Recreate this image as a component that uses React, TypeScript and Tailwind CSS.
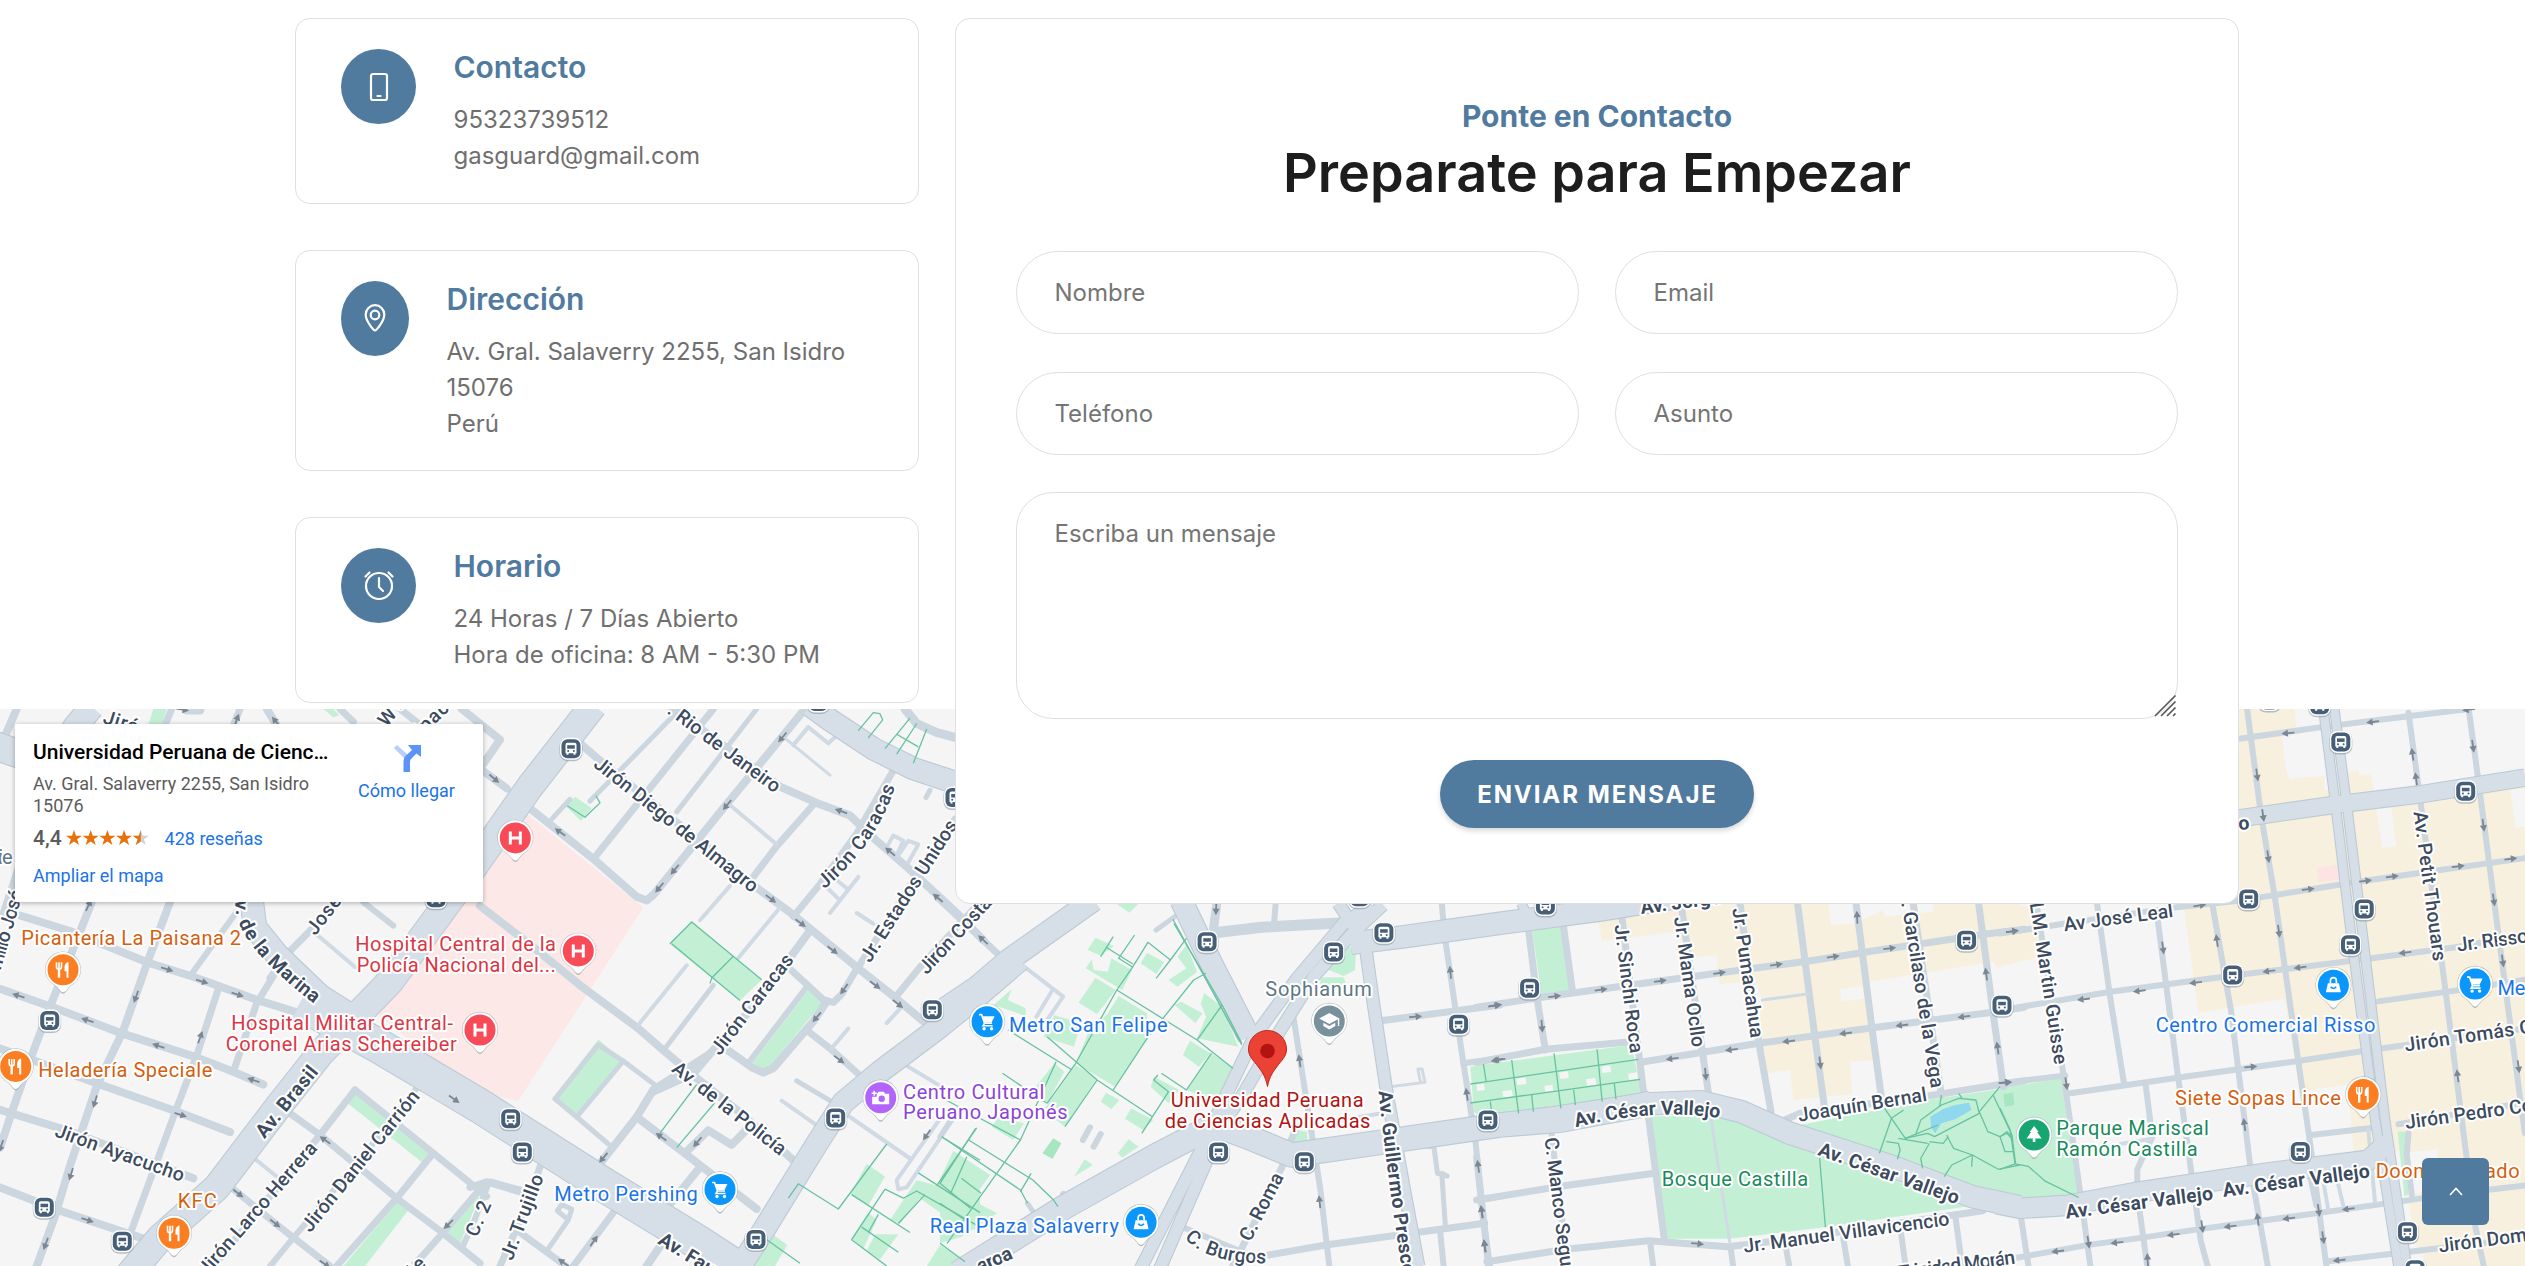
import React from "react";

/* ------------------------------------------------------------------ */
/* Map data: every tile has its own grid, projected to map pixels.     */
/* ------------------------------------------------------------------ */

type Tile = { x: number; y: number; sx: number; sy: number };
type Pt = [number, number];

const MAP_TOP = 709;

const tiles: Record<string, Tile> = {
  A: { x: 0, y: 700, sx: 3, sy: 2.77 },
  B: { x: 480, y: 700, sx: 3, sy: 2.77 },
  C: { x: 940, y: 890, sx: 2.8, sy: 3 },
  D: { x: 1480, y: 890, sx: 2.904, sy: 3 },
  E: { x: 2000, y: 700, sx: 2.987, sy: 2.77 },
};

const project = (tile: string, x: number, y: number): Pt => {
  const t = tiles[tile];
  return [t.x + x / t.sx, t.y + y / t.sy - MAP_TOP];
};

const parse = (tile: string, s: string): Pt[] =>
  s.split(" ").map((p) => {
    const [x, y] = p.split(",").map(Number);
    return project(tile, x, y);
  });

const line = (tile: string, s: string) =>
  "M" + parse(tile, s).map(([x, y]) => `${x.toFixed(1)} ${y.toFixed(1)}`).join("L");

const zones: [string, string, string][] = [
  ["B", "#fce8e6", "140,315 490,575 115,1110 60,1100 -40,1055 -80,1040 -325,858 -200,690 0,450"],
  ["D", "#f8f0de", "340,85 470,70 600,60 600,30 1568,30 1568,205 1500,230 1490,215 1130,275 1145,510 1075,515 1080,612 910,630 900,540 833,550 805,440 820,330 800,275 695,282 688,195 620,202 565,125 355,153"],
  ["D", "#f5f5f5", "1010,40 1320,40 1315,65 1175,80 1170,60 1090,100 1020,105"],
  ["D", "#f5f5f5", "1045,298 1110,288 1115,325 1050,335"],
  ["E", "#f8f0de", "-10,570 120,570 110,715 55,725 -10,742"],
  ["E", "#f8f0de", "700,25 880,25 885,75 843,105 853,190 865,218 970,210 970,250 1040,250 1040,200 1070,195 1075,210 1108,207 1118,262 1568,200 1568,1490 1250,1535 1190,1250 1055,1250 1040,1065 895,1085 850,828 593,866 550,580 700,560"],
  ["E", "#f5f5f5", "1123,298 1168,292 1183,405 1142,410"],
  ["E", "#f5f5f5", "1525,250 1568,245 1568,350 1540,355"],
  ["E", "#f5f5f5", "1215,1252 1305,1245 1320,1350 1225,1370"],
  ["E", "#fce4e4", "945,467 1012,455 1017,497 952,505"],
  ["E", "#c3f0d5", "1188,1195 1212,1195 1220,1370 1208,1375"],
  ["E", "#f8f0de", "1250,1440 1568,1400 1568,1568 1270,1568"],
  ["A", "#c3f0d5", "460,25 500,25 485,70 445,70"],
  ["A", "#c3f0d5", "970,25 1000,25 1018,42 1000,48"],
  ["A", "#c3f0d5", "1070,1090 1290,1252 1265,1280 1040,1115"],
  ["A", "#c3f0d5", "1193,1390 1226,1412 1095,1568 1030,1568"],
  ["A", "#c3f0d5", "1450,1350 1380,1505 1330,1470"],
  ["B", "#c3f0d5", "635,612 845,775 780,832 568,675"],
  ["B", "#c3f0d5", "988,800 1030,835 875,1010 850,1024 818,1005"],
  ["B", "#c3f0d5", "285,268 335,300 303,335 258,295"],
  ["B", "#c3f0d5", "355,940 425,995 290,1152 218,1105"],
  ["B", "#c3f0d5", "1160,1285 1215,1320 1165,1400 1110,1370"],
  ["B", "#c3f0d5", "1420,1250 1500,1300 1500,1470 1440,1460 1320,1380 1260,1450 1230,1440 1310,1330 1370,1345"],
  ["B", "#c3f0d5", "1115,1490 1165,1420 1190,1440 1150,1520"],
  ["B", "#c3f0d5", "1185,1480 1255,1480 1200,1550 1160,1525"],
  ["B", "#c3f0d5", "860,1468 922,1510 885,1568 780,1568"],
  ["B", "#c3f0d5", "1380,1510 1450,1550 1440,1568 1340,1568"],
  ["C", "#c3f0d5", "495,42 555,42 530,68"],
  ["C", "#c3f0d5", "435,143 487,168 450,197 413,180"],
  ["C", "#c3f0d5", "425,208 430,240 470,245 480,205 538,240 510,300 408,235"],
  ["C", "#c3f0d5", "435,263 492,300 440,372 388,338"],
  ["C", "#c3f0d5", "580,188 628,217 605,252 562,220"],
  ["C", "#c3f0d5", "500,318 580,370 578,450 490,590 380,520 415,430 470,370"],
  ["C", "#c3f0d5", "690,165 720,245 665,290 640,270 690,235 665,200"],
  ["C", "#c3f0d5", "200,298 150,345 240,378 240,355 190,330"],
  ["C", "#c3f0d5", "320,375 395,400 375,470 290,440"],
  ["C", "#c3f0d5", "675,335 735,370 715,400 657,345"],
  ["C", "#c3f0d5", "740,310 790,350 835,470 720,445 745,380 730,340"],
  ["C", "#c3f0d5", "700,452 757,490 725,530 680,495"],
  ["C", "#c3f0d5", "760,490 822,535 785,640 690,600"],
  ["C", "#c3f0d5", "380,525 440,565 350,710 290,660"],
  ["C", "#c3f0d5", "320,520 348,545 300,640 265,595"],
  ["C", "#c3f0d5", "165,680 235,700 205,750 145,710"],
  ["C", "#c3f0d5", "465,608 502,630 480,657 450,635"],
  ["C", "#c3f0d5", "535,655 597,690 570,720 518,687"],
  ["C", "#c3f0d5", "600,560 670,600 640,640 590,590"],
  ["C", "#c3f0d5", "38,783 140,855 90,930 0,870"],
  ["C", "#c3f0d5", "0,870 90,930 160,970 60,1040 0,1060"],
  ["C", "#c3f0d5", "0,1070 70,1115 60,1128 0,1128"],
  ["C", "#a8e5c1", "317,745 340,760 315,807 287,790"],
  ["C", "#c3f0d5", "528,748 556,770 510,803 498,790"],
  ["C", "#c3f0d5", "405,808 428,825 375,860"],
  ["C", "#c3f0d5", "1110,165 1165,175 1162,240 1130,258 1088,240"],
  ["C", "#c3f0d5", "1065,262 1130,262 1140,290 1065,290"],
  ["C", "#c3f0d5", "1000,720 1028,725 1030,768 988,770"],
  ["D", "#c3f0d5", "150,107 233,97 260,303 178,313"],
  ["D", "#c3f0d5", "-28,530 0,525 440,465 470,612 0,680 -18,665"],
  ["D", "#f5f5f5", "105,566 132,562 135,582 108,585"],
  ["D", "#f5f5f5", "65,604 92,600 95,620 68,622"],
  ["D", "#f5f5f5", "187,588 210,584 213,603 190,606"],
  ["D", "#f5f5f5", "230,548 255,544 258,564 233,567"],
  ["D", "#f5f5f5", "308,568 335,564 338,584 311,587"],
  ["D", "#f5f5f5", "352,530 378,526 381,546 355,549"],
  ["D", "#f5f5f5", "430,551 456,547 459,567 433,570"],
  ["D", "#f5f5f5", "-10,584 12,581 14,600 -8,603"],
  ["D", "#c3f0d5", "497,680 640,672 760,700 990,790 1410,950 1000,1012 725,1046 542,1046"],
  ["D", "#c3f0d5", "930,705 1300,630 1490,600 1568,590 1568,920 1440,890 1290,835 940,720"],
  ["E", "#c3f0d5", "0,1075 185,1048 190,1100 235,1380 60,1385 0,1375"],
  ["D", "#a8e5c1", "1520,612 1548,608 1552,645 1524,650"],
  ["D", "#8fd8ee", "1308,680 1345,657 1380,645 1420,638 1427,660 1380,688 1340,700 1322,730 1310,712"],
];

/* [tile, width, points] */
const minorRoads: [string, number, string][] = [
  ["A", 8, "50,25 15,100"],
  ["A", 7, "515,25 495,70"],
  ["A", 9, "560,28 600,28"],
  ["A", 7, "720,25 700,70"],
  ["A", 8, "830,70 800,25"],
  ["A", 7, "1020,25 1060,60"],
  ["A", 7, "1200,25 1290,90"],
  ["A", 8, "1385,25 1500,110 1440,190 1520,245"],
  ["A", 7, "60,450 10,590"],
  ["A", 8, "60,597 210,640 445,728 575,765 775,832 960,885"],
  ["A", 8, "0,800 170,855 370,925 590,990 700,1030 790,1065"],
  ["A", 8, "0,965 60,985 300,1065 530,1140 690,1197"],
  ["A", 8, "0,1135 200,1192 580,1325"],
  ["A", 8, "0,1350 180,1415 310,1455 430,1492"],
  ["A", 8, "275,560 150,850 95,985 40,1130 0,1240"],
  ["A", 8, "510,560 445,720 370,915 290,1070 210,1290 165,1430 110,1568"],
  ["A", 6, "715,580 570,765"],
  ["A", 7, "655,800 590,985 530,1130 450,1330 390,1480"],
  ["A", 7, "820,765 770,840 700,1030"],
  ["A", 7, "1015,560 865,700 810,770"],
  ["A", 4, "945,645 1065,740"],
  ["A", 6, "1090,560 1180,625"],
  ["A", 7, "870,1145 960,1205 1190,1380 1320,1470 1440,1560"],
  ["A", 4, "750,1260 830,1320"],
  ["A", 7, "680,1340 760,1400 840,1460 990,1568"],
  ["A", 7, "1065,1080 960,1205 640,1568"],
  ["A", 7, "1065,1080 1300,1255 1460,1375"],
  ["A", 6, "1250,1075 1100,1250 880,1490 810,1568"],
  ["A", 7, "1300,1255 1190,1380 1010,1568"],
  ["A", 7, "1570,1360 1470,1335 1435,1360 1330,1475 1240,1568"],
  ["A", 6, "1465,1340 1420,1450 1390,1510"],
  ["B", 8, "0,570 140,670 300,790 475,910 550,970 640,1040 790,1150 940,1275"],
  ["B", 8, "300,120 350,160 830,520 940,595 1130,740 1240,820 1330,890"],
  ["B", 8, "150,300 340,440 470,545 500,555 520,540 730,300 975,25"],
  ["B", 5, "600,25 330,280"],
  ["B", 7, "700,25 470,290 345,435"],
  ["B", 5, "830,25 590,310"],
  ["B", 8, "560,10 750,140 900,240 1010,285 1110,320 1190,390 1290,470 1430,590 1510,665"],
  ["B", 7, "1240,195 1130,370 1020,510 940,600"],
  ["B", 8, "985,645 830,840 690,980 520,1080 470,1155 355,1290"],
  ["B", 8, "690,980 640,1035 520,1085"],
  ["B", 7, "1000,290 890,405 820,490"],
  ["B", 4, "755,295 890,400"],
  ["B", 4, "750,515 660,610"],
  ["B", 4, "900,575 775,715"],
  ["B", 4, "620,735 475,900"],
  ["B", 5, "700,790 555,965"],
  ["B", 3, "920,110 1050,208"],
  ["B", 4, "940,125 985,75 1045,120 1075,95"],
  ["B", 4, "1030,510 1080,555"],
  ["B", 4, "1065,495 1105,525"],
  ["B", 4, "1135,490 1050,590"],
  ["B", 4, "1130,590 1180,620"],
  ["B", 4, "1225,400 1240,375 1270,390 1250,430"],
  ["B", 4, "1255,430 1285,390 1315,400 1285,450"],
  ["B", 7, "1425,330 1300,500 1170,690 1130,745 1085,815 1060,838 1030,830 930,745"],
  ["B", 8, "1040,835 1000,890 880,1020 850,1032 820,1020 735,965"],
  ["B", 6, "980,795 810,1000"],
  ["B", 7, "980,915 1050,965 1140,1040"],
  ["B", 4, "1105,910 1055,965"],
  ["B", 4, "1220,895 1265,850"],
  ["B", 7, "1500,560 1320,740 1245,825"],
  ["B", 9, "1275,25 1310,65 1370,90 1430,105"],
  ["B", 5, "1350,250 1338,270"],
  ["B", 8, "470,1155 620,1260 830,1410"],
  ["B", 8, "615,1255 685,1192 755,1232 800,1190"],
  ["B", 8, "655,1300 545,1425"],
  ["B", 8, "550,1500 500,1568"],
  ["B", 7, "185,1280 140,1400 60,1568"],
  ["B", 7, "-30,1350 20,1335 130,1365"],
  ["B", 7, "400,1420 280,1568"],
  ["B", 7, "120,1475 290,1590"],
  ["B", 5, "205,1520 265,1440 275,1410 245,1398 232,1415 265,1440"],
  ["B", 5, "225,1105 355,955 430,1000 530,1070"],
  ["B", 5, "225,1105 290,1155 385,1230"],
  ["B", 5, "430,1000 290,1155"],
  ["B", 5, "215,330 270,275"],
  ["B", 4, "1265,1005 1400,1080"],
  ["B", 5, "950,1055 1050,1110"],
  ["B", 4, "905,1110 1005,1175"],
  ["B", 4, "1110,1155 1290,1270"],
  ["B", 4, "1380,1160 1250,1330 1255,1355 1280,1350 1420,1160"],
  ["C", 7, "-5,25 175,205"],
  ["C", 4, "230,225 345,320 300,390"],
  ["C", 4, "315,300 270,380"],
  ["C", 5, "605,120 660,78"],
  ["C", 6, "400,750 420,712"],
  ["C", 6, "430,770 450,732"],
  ["C", 5, "0,740 30,690"],
  ["C", 6, "345,912 360,935"],
  ["C", 5, "245,940 270,980"],
  ["C", 11, "770,128 900,112 1130,98"],
  ["C", 9, "775,40 766,115"],
  ["C", 6, "940,40 935,105"],
  ["C", 6, "1405,40 1412,130 1445,370 1460,480 1480,620 1500,760 1520,980 1540,1128"],
  ["C", 7, "1235,392 1568,345"],
  ["C", 6, "1465,520 1570,505"],
  ["C", 6, "985,350 1010,520 1045,760 1065,900 1090,1128"],
  ["C", 3, "1260,590 1358,577 1350,537 1338,537 1345,575"],
  ["C", 5, "1350,768 1383,770 1393,850 1420,858 1405,850 1415,1010"],
  ["C", 7, "920,1095 1080,1065 1350,1025 1525,1000"],
  ["C", 6, "1400,1020 1410,1128"],
  ["C", 6, "1520,928 1580,918"],
  ["C", 7, "965,815 820,1128"],
  ["C", 6, "665,1005 900,1110"],
  ["C", 4, "1170,682 1245,668"],
  ["C", 7, "1000,710 975,770"],
  ["D", 7, "140,110 165,320 190,480"],
  ["D", 7, "240,90 268,300"],
  ["D", 7, "410,65 450,400 478,630"],
  ["D", 7, "585,50 645,480 665,620"],
  ["D", 7, "755,40 810,460 845,665"],
  ["D", 7, "922,40 970,420 1000,650"],
  ["D", 7, "1092,40 1140,430 1168,640"],
  ["D", 7, "1258,40 1340,615"],
  ["D", 7, "1448,40 1490,370 1520,590"],
  ["D", 7, "-10,352 180,322 560,268 960,212 1160,180 1470,132 1580,118"],
  ["D", 7, "-10,517 190,478 440,455"],
  ["D", 7, "475,515 810,460 1130,415 1500,365 1580,352"],
  ["D", 6, "205,710 255,1128"],
  ["D", 7, "490,685 535,1045"],
  ["D", 7, "-10,930 240,888 505,850"],
  ["D", 7, "20,1115 250,1078 490,1052 720,1070 900,1048 1460,962"],
  ["D", 7, "-10,800 25,1128"],
  ["D", 7, "880,692 930,670 1300,618 1580,572"],
  ["D", 6, "495,1065 503,1128"],
  ["D", 6, "728,1075 735,1128"],
  ["D", 6, "888,1070 898,1128"],
  ["D", 6, "1055,1045 1068,1128"],
  ["D", 6, "1220,1010 1236,1128"],
  ["D", 6, "1380,975 1400,1128"],
  ["D", 3, "670,680 725,1055"],
  ["D", 3, "820,330 950,312"],
  ["E", 6, "738,25 780,320 820,540 880,930 925,1220 975,1568"],
  ["E", 6, "1220,35 1250,240 1330,800 1420,1460 1445,1568"],
  ["E", 6, "1400,25 1430,230 1520,870 1568,1200"],
  ["E", 6, "710,108 960,75 1220,45 1400,25"],
  ["E", 6, "0,647 190,620 520,575 720,555 1060,505 1320,470 1568,438"],
  ["E", 6, "30,855 330,808 680,765 1070,720 1360,685 1568,650"],
  ["E", 6, "635,570 690,860 750,1310 800,1568"],
  ["E", 6, "470,600 530,1030 600,1500 620,1568"],
  ["E", 6, "290,565 330,830 370,1060"],
  ["E", 6, "110,570 190,1040 245,1400 270,1568"],
  ["E", 6, "205,1090 540,1045 890,1000 1100,970 1568,910"],
  ["E", 6, "0,1062 195,1040"],
  ["E", 6, "930,1205 1115,1185"],
  ["E", 6, "1190,1175 1568,1115"],
  ["E", 6, "1130,835 1360,805 1568,775"],
  ["E", 6, "435,1065 455,1210 410,1300 410,1370 440,1568"],
  ["E", 4, "360,1230 455,1215"],
  ["E", 6, "50,1545 260,1510 420,1490 600,1465 960,1420 1150,1395 1350,1368 1568,1345"],
  ["E", 6, "62,1430 85,1568"],
  ["E", 6, "1220,1200 1215,1260 1230,1370"],
  ["E", 6, "920,1290 945,1400"],
  ["E", 4, "965,1330 980,1410"],
  ["E", 4, "1010,1340 1025,1400"],
  ["E", 4, "1100,1190 1120,1390"],
  ["E", 6, "975,1555 1210,1530 1568,1490"],
];

const majorRoads: [string, number, string][] = [
  ["A", 24, "275,20 225,75 200,110"],
  ["A", 28, "-20,125 60,150"],
  ["A", 23, "755,555 765,630 830,705 960,820 1080,890"],
  ["B", 27, "340,15 150,240 -40,490 -270,780 -480,980 -600,1120 -790,1350 -960,1490 -1060,1600"],
  ["B", 34, "-540,840 -300,960 -100,1070 0,1125 375,1345 650,1500 800,1590"],
  ["B", 22, "990,15 1050,55 1180,135 1300,190 1430,230 1500,240"],
  ["B", 22, "1620,720 1500,815 1380,905 1200,1030 1090,1115 1010,1230 850,1470 760,1600"],
  ["C", 22, "-20,380 105,290 190,212 430,30"],
  ["C", 22, "675,30 760,220 865,440"],
  ["C", 12, "1210,45 1130,100 1000,265 880,440 790,640 740,760 555,1150"],
  ["C", 12, "1240,45 1155,130 1050,255 950,425 850,610 800,690 760,780 610,1150"],
  ["C", 24, "50,1150 350,950 600,800 770,705"],
  ["C", 24, "770,705 860,740 985,795 1150,770 1568,705 1740,690 1990,640"],
  ["C", 22, "1150,160 1300,140 1568,100 1850,60 2050,25"],
  ["C", 12, "1115,40 1190,160 1215,350 1250,600 1300,900 1340,1128"],
  ["D", 9, "120,40 150,105"],
  ["D", 22, "0,710 200,685 480,642 640,635 760,665 900,730 1200,830 1430,920 1568,950"],
  ["E", 17, "700,330 1000,290 1250,262 1568,215"],
  ["E", 20, "-10,1395 60,1408 200,1400 400,1365 800,1310 1100,1275 1160,1225"],
  ["E", 9, "965,20 1010,350 1050,660 1120,1160 1190,1568"],
  ["E", 9, "998,20 1040,320 1085,660 1150,1160 1215,1568"],
];

const parkPaths: [string, string][] = [
  ["B", "570,675 635,615 845,775"],
  ["B", "575,675 780,832"],
  ["B", "760,710 695,770 690,785"],
  ["B", "650,1065 540,1200"],
  ["B", "705,1115 590,1240"],
  ["B", "262,293 315,325 360,285 348,265"],
  ["B", "1135,85 1180,35 1200,38 1208,55 1165,105"],
  ["B", "1290,50 1215,135"],
  ["B", "1310,65 1250,150"],
  ["B", "1340,80 1300,175"],
  ["B", "1250,95 1315,130"],
  ["B", "1220,1230 1075,1410 955,1340 925,1380"],
  ["B", "1385,1210 1500,1275"],
  ["B", "1315,1310 1500,1420"],
  ["B", "1490,1185 1370,1345"],
  ["B", "1215,1355 1115,1495 1220,1568"],
  ["B", "1215,1355 1270,1380 1310,1360 1500,1460"],
  ["B", "1115,1370 1290,1475"],
  ["B", "1335,1370 1255,1450"],
  ["B", "1145,1460 1255,1530"],
  ["B", "1195,1425 1165,1475"],
  ["B", "860,1495 960,1560"],
  ["C", "652,88 845,465"],
  ["C", "655,100 790,345 845,460"],
  ["C", "645,210 582,157 540,230 495,300 380,520 300,640"],
  ["C", "690,145 645,210 605,265"],
  ["C", "545,135 500,205 540,232"],
  ["C", "485,140 450,200"],
  ["C", "465,172 540,222"],
  ["C", "495,300 720,450 820,535"],
  ["C", "745,250 710,270 580,445 485,600"],
  ["C", "790,345 720,450"],
  ["C", "300,440 440,570 595,680 565,730"],
  ["C", "760,490 690,600 620,550"],
  ["C", "175,550 300,640"],
  ["C", "190,420 370,540"],
  ["C", "325,515 225,750 20,1060"],
  ["C", "440,570 350,710"],
  ["C", "640,605 595,680"],
  ["C", "640,605 598,570 610,555"],
  ["C", "5,740 225,900 245,940"],
  ["C", "80,750 260,870 318,930 330,950"],
  ["C", "0,620 225,750"],
  ["C", "255,850 225,905"],
  ["C", "100,715 0,880 85,955"],
  ["C", "60,865 115,910"],
  ["C", "75,800 30,910"],
  ["C", "0,940 70,990"],
  ["C", "0,1060 70,1115"],
  ["D", "-28,582 0,578 460,508"],
  ["D", "-28,639 0,635 465,568"],
  ["D", "10,522 18,575"],
  ["D", "92,510 112,670"],
  ["D", "215,490 235,655"],
  ["D", "340,478 355,635"],
  ["D", "150,615 155,665"],
  ["D", "272,600 277,645"],
  ["D", "390,580 395,628"],
  ["D", "30,635 33,660"],
  ["D", "985,790 1003,1012"],
  ["D", "1175,655 1235,745 1330,705"],
  ["D", "1230,660 1195,685 1160,790"],
  ["D", "1180,755 1215,760 1220,780 1212,808"],
  ["D", "1235,745 1300,730 1320,740 1450,670 1440,630 1390,625 1340,645 1280,690 1265,735"],
  ["D", "1340,615 1335,650"],
  ["D", "1390,610 1400,625"],
  ["D", "1510,590 1450,665 1475,725 1510,740 1530,725 1545,740"],
  ["D", "1300,760 1215,745"],
  ["D", "1305,760 1280,805 1285,835"],
  ["D", "1355,735 1375,775 1430,795 1505,838 1568,825"],
  ["D", "1305,755 1345,760 1360,740"],
  ["D", "1430,795 1370,825 1348,860"],
  ["D", "1430,795 1428,830"],
  ["D", "1490,615 1545,735 1555,820"],
  ["D", "1510,740 1525,785 1550,785"],
  ["E", "0,1130 30,1190 45,1285 0,1300"],
  ["E", "45,1285 85,1292 135,1333 235,1378"],
  ["E", "0,1210 20,1200 35,1215"],
];

/* [tile, x, y, heading in degrees; 0 points right] */
const arrows: [string, number, number, number][] = [
  ["A", 548, 27, 10], ["A", 710, 55, -70], ["A", 828, 60, -130],
  ["A", 1483, 218, 40], ["A", 266, 568, -65],
  ["A", 502, 746, 18], ["A", 607, 780, 18], ["A", 713, 816, 18], ["A", 408, 822, 110], ["A", 55, 819, 198],
  ["A", 262, 887, 198], ["A", 475, 958, 198], ["A", 601, 934, -70], ["A", 760, 1053, 198], ["A", 285, 1113, 107],
  ["A", 542, 1149, 18], ["A", 213, 1314, 107], ["A", 3, 1236, 110], ["A", 263, 1441, 18], ["A", 137, 1507, 110],
  ["A", 975, 1219, 215], ["A", 1363, 1106, 35], ["A", 715, 1367, 38], ["A", 826, 1450, 38], ["A", 1345, 1453, 135],
  ["A", 975, 1563, 35],
  ["B", 907, 104, 130], ["B", 741, 291, 130], ["B", 584, 470, 130], ["B", 538, 520, 130], ["B", 240, 366, 215],
  ["B", 873, 551, 37], ["B", 962, 618, 37], ["B", 1058, 693, 37], ["B", 1186, 790, 37], ["B", 1254, 842, 37],
  ["B", 1083, 308, 200], ["B", 1230, 420, 220], ["B", 1373, 548, 220], ["B", 1092, 801, 125], ["B", 1010, 879, 130],
  ["B", 1078, 996, 37], ["B", 543, 1210, 215], ["B", 652, 1225, 130], ["B", 370, 1268, 130], ["B", 342, 1498, -55],
  ["B", 250, 1558, 215], ["B", 1340, 1205, 125],
  ["C", 773, 56, 92], ["C", 120, 149, 222], ["C", 1007, 512, -98], ["C", 1332, 380, -5], ["C", 1553, 347, -8],
  ["C", 1429, 247, -96], ["C", 1560, 510, 170], ["C", 1475, 613, -98], ["C", 1507, 829, -98], ["C", 1517, 965, -98],
  ["C", 1525, 1068, -98], ["C", 1063, 935, -96],
  ["D", 46, 346, -8], ["D", 217, 319, -8], ["D", 352, 299, -8], ["D", 524, 273, -8], ["D", 696, 249, -8],
  ["D", 861, 224, -8], ["D", 1026, 200, -8], ["D", 1190, 175, -8], ["D", 1546, 124, -8], ["D", 1095, 82, -93],
  ["D", 1470, 252, -98], ["D", 1503, 474, -98], ["D", 180, 409, 85], ["D", 655, 553, 85], ["D", 988, 519, 83],
  ["D", 55, 509, 173], ["D", 558, 506, 173], ["D", 730, 479, 173], ["D", 896, 454, 173], ["D", 1061, 430, 173],
  ["D", 1225, 406, 173], ["D", 1405, 380, 173], ["D", 632, 1061, 6], ["D", 1525, 577, -8],
  ["D", 5, 965, -98], ["D", 14, 1067, -98],
  ["E", 860, 92, 175], ["E", 1113, 61, 173], ["E", 1400, 27, 173], ["E", 768, 208, 82], ["E", 1232, 150, -98],
  ["E", 1243, 218, -98], ["E", 1413, 128, 82], ["E", 1444, 347, 82], ["E", 786, 320, 82], ["E", 801, 434, 82],
  ["E", 921, 524, -7], ["E", 1092, 501, -7], ["E", 1172, 489, -7], ["E", 1369, 461, -7], ["E", 1526, 440, -7],
  ["E", 1475, 554, 82], ["E", 1502, 723, 82], ["E", 833, 641, 82], ["E", 648, 666, -98], ["E", 487, 687, 82],
  ["E", 597, 569, -8], ["E", 37, 641, -8], ["E", 1209, 700, 173], ["E", 896, 741, 173], ["E", 803, 751, 173],
  ["E", 584, 783, 173], ["E", 416, 806, 173], ["E", 249, 829, 173], ["E", 749, 1016, -5], ["E", 1367, 1041, -98],
  ["E", 1549, 1016, 82], ["E", 730, 1176, -98], ["E", 198, 1063, 82], ["E", 1040, 1410, 173], ["E", 862, 1436, 173],
  ["E", 687, 1458, 173], ["E", 517, 1481, 173], ["E", 349, 1503, 173], ["E", 172, 1527, 173], ["E", 952, 1414, 82],
  ["E", 770, 1438, -98], ["E", 604, 1459, 82], ["E", 264, 1502, 82], ["E", 441, 1550, -93], ["E", 965, 1490, 82],
  ["E", 1013, 1552, 173], ["E", 17, 1060, -3],
];

const busStops: [string, number, number][] = [
  ["A", 149, 888], ["A", 133, 1405], ["A", 367, 1499], ["A", 1308, 548],
  ["B", 273, 135], ["B", 1357, 858], ["B", 1067, 1158], ["B", 92, 1160], ["B", 127, 1252], ["B", 828, 1494],
  ["B", 1425, 270], ["B", 1015, 4],
  ["C", 748, 155], ["C", 1102, 186], ["C", 1243, 128], ["C", 1452, 403], ["C", 780, 786], ["C", 1020, 815],
  ["C", 1534, 690], ["C", 1175, 20],
  ["D", 190, 45], ["D", 144, 295], ["D", 1413, 151], ["D", 1516, 346],
  ["E", 955, 13], ["E", 1018, 116], ["E", 1391, 253], ["E", 743, 551], ["E", 1088, 579], ["E", 1047, 678],
  ["E", 695, 762], ["E", 897, 1251], ["E", 1217, 1473], ["E", 1240, 1578], ["E", 805, 0],
];

/* Street names follow the line from the first to the last point, bending through the middle one. */
const streets: { tile: string; text: string; pts: string; bold?: boolean }[] = [
  { tile: "A", text: "Jirón", pts: "312,45 450,85" },
  { tile: "A", text: "Wa", pts: "1145,65 1205,-5" },
  { tile: "A", text: "ipac", pts: "1250,88 1338,12" },
  { tile: "A", text: "milio José", pts: "-18,745 50,525" },
  { tile: "A", text: "v. de la Marina", pts: "728,555 775,672 960,830", bold: true },
  { tile: "A", text: "José", pts: "930,643 1012,545" },
  { tile: "A", text: "Av. Brasil", pts: "778,1205 942,1018", bold: true },
  { tile: "A", text: "Jirón Ayacucho", pts: "168,1190 553,1318" },
  { tile: "A", text: "Jirón Larco Herrera", pts: "605,1585 940,1230" },
  { tile: "A", text: "Jirón Daniel Carrión", pts: "915,1465 1247,1086" },
  { tile: "A", text: "C. 2", pts: "1412,1483 1457,1388" },
  { tile: "A", text: "te", pts: "1225,1585 1268,1550" },
  { tile: "B", text: ". Rio de Janeiro", pts: "572,20 700,110 898,245" },
  { tile: "B", text: "Jirón Diego de Almagro", pts: "350,168 830,522" },
  { tile: "B", text: "Jirón Caracas", pts: "1020,510 1148,380 1227,232" },
  { tile: "B", text: "Jirón Caracas", pts: "703,975 928,708" },
  { tile: "B", text: "Jr. Estados Unidos", pts: "1153,720 1418,335" },
  { tile: "B", text: "Jirón Costa", pts: "1325,750 1525,550" },
  { tile: "B", text: "Av. de la Policía", pts: "585,1012 914,1250" },
  { tile: "B", text: "Jr. Trujillo", pts: "78,1548 173,1314" },
  { tile: "B", text: "Av. Faucett", pts: "542,1488 790,1630", bold: true },
  { tile: "C", text: "aroa", pts: "105,1130 200,1085", bold: true },
  { tile: "C", text: "C. Roma", pts: "852,1048 947,850" },
  { tile: "C", text: "C. Burgos", pts: "698,1028 780,1082 917,1100" },
  { tile: "C", text: "Av. Guillermo Prescott", pts: "1247,602 1275,860 1320,1195", bold: true },
  { tile: "D", text: "Av. Jorge", pts: "466,52 700,20", bold: true },
  { tile: "D", text: "Jr. Sinchi Roca", pts: "410,103 456,490" },
  { tile: "D", text: "Jr. Mama Ocllo", pts: "583,80 636,472" },
  { tile: "D", text: "Jr. Pumacahua", pts: "752,53 806,444" },
  { tile: "D", text: ". Garcilaso de la Vega", pts: "1243,35 1330,594" },
  { tile: "D", text: "Av. César Vallejo", pts: "273,692 500,655 700,665", bold: true },
  { tile: "D", text: "Joaquín Bernal", pts: "923,675 1298,612" },
  { tile: "D", text: "Av. César Vallejo", pts: "985,775 1392,925", bold: true },
  { tile: "D", text: "Jr. Manuel Villavicencio", pts: "765,1068 1364,985" },
  { tile: "D", text: "C. Manco Segura", pts: "207,742 260,1180" },
  { tile: "D", text: "Trinidad Morán", pts: "1215,1148 1555,1100" },
  { tile: "E", text: "ALM. Martin Guisse", pts: "103,525 183,1010" },
  { tile: "E", text: "Av José Leal", pts: "190,622 518,582" },
  { tile: "E", text: "Av. Petit Thouars", pts: "1255,308 1315,724" },
  { tile: "E", text: "o", pts: "712,341 745,339", bold: true },
  { tile: "E", text: "Jr. Risso", pts: "1365,678 1578,652" },
  { tile: "E", text: "Jirón Tomás G", pts: "1208,955 1592,903" },
  { tile: "E", text: "Jirón Pedro Co", pts: "1210,1170 1592,1120" },
  { tile: "E", text: "Jirón Dom", pts: "1310,1512 1575,1480" },
  { tile: "E", text: "Av. César Vallejo", pts: "195,1418 637,1365", bold: true },
  { tile: "E", text: "Av. César Vallejo", pts: "665,1358 1105,1303", bold: true },
];

type PinKind = "food" | "hospital" | "cart" | "bag" | "camera" | "school" | "tree";

const pinFill: Record<PinKind, string> = {
  food: "#fb7f22", hospital: "#f94a57", cart: "#0a96fb", bag: "#0a96fb",
  camera: "#b265fb", school: "#78919c", tree: "#17a671",
};

const pins: [string, number, number, PinKind][] = [
  ["A", 189, 747, "food"], ["A", 47, 1015, "food"], ["A", 522, 1477, "food"], ["A", 1440, 914, "hospital"],
  ["B", 106, 382, "hospital"], ["B", 295, 695, "hospital"], ["B", 720, 1356, "cart"], ["B", 1202, 1102, "camera"],
  ["C", 132, 395, "cart"], ["C", 563, 997, "bag"], ["C", 1090, 393, "school"],
  ["E", 996, 790, "bag"], ["E", 1419, 787, "cart"], ["E", 1085, 1093, "food"], ["E", 102, 1205, "tree"],
];

/* [tile, left, right, centre line, colour, text] */
const places: [string, number, number, number, string, string][] = [
  ["A", 64, 723, 658, "#d55f0e", "Picantería La Paisana 2"],
  ["A", 115, 637, 1026, "#d55f0e", "Heladería Speciale"],
  ["A", 533, 650, 1388, "#d55f0e", "KFC"],
  ["A", 694, 1359, 894, "#dc3644", "Hospital Militar Central-"],
  ["A", 677, 1370, 953, "#dc3644", "Coronel Arias Schereiber"],
  ["A", 1066, 1668, 677, "#dc3644", "Hospital Central de la"],
  ["A", 1070, 1667, 735, "#dc3644", "Policía Nacional del..."],
  ["A", -22, 38, 436, "#5d7785", "tie"],
  ["B", 223, 653, 1367, "#1a73e8", "Metro Pershing"],
  ["C", 193, 637, 406, "#1a73e8", "Metro San Felipe"],
  ["C", -29, 501, 1009, "#1a73e8", "Real Plaza Salaverry"],
  ["B", 1269, 1693, 1085, "#8d43d8", "Centro Cultural"],
  ["B", 1269, 1763, 1142, "#8d43d8", "Peruano Japonés"],
  ["C", 911, 1209, 296, "#5d7785", "Sophianum"],
  ["C", 646, 1186, 631, "#b31412", "Universidad Peruana"],
  ["C", 629, 1205, 693, "#b31412", "de Ciencias Aplicadas"],
  ["D", 528, 953, 867, "#188a5b", "Bosque Castilla"],
  ["E", 168, 624, 1186, "#188a5b", "Parque Mariscal"],
  ["E", 168, 590, 1243, "#188a5b", "Ramón Castilla"],
  ["E", 465, 1121, 899, "#1a73e8", "Centro Comercial Risso"],
  ["E", 523, 1018, 1103, "#d55f0e", "Siete Sopas Lince"],
  ["E", 1122, 1552, 1305, "#d55f0e", "Doomo Saltado"],
  ["E", 1486, 1640, 799, "#1a73e8", "Metro"],
];

function PinGlyph({ kind }: { kind: PinKind }) {
  switch (kind) {
    case "hospital":
      return <path d="M-5 -6.5V6.5M5 -6.5V6.5M-5 0H5" stroke="#fff" strokeWidth="3" />;
    case "food":
      return (
        <g fill="none" stroke="#fff">
          <path d="M-6.5 -7.5V-3Q-6.5 -.5 -4 -.5Q-1.500 -.5 -1.500 -3V-7.500M-4 -7.500V-1" strokeWidth="1.600" />
          <path d="M-4 -1V8" strokeWidth="2.400" />
          <path d="M5.500 -7.800V8H3.500V1.500H1.500V-3Q2 -7 5.500 -7.800Z" fill="#fff" stroke="none" />
        </g>
      );
    case "cart":
      return (
        <g>
          <path d="M-8 -7H-5.500L-2.500 1.500H5" fill="none" stroke="#fff" strokeWidth="1.700" />
          <path d="M-5 -5.500H7.500L4.500 .5H-2.800Z" fill="#fff" />
          <path d="M-2.500 1.500L-4 4H5.500" fill="none" stroke="#fff" strokeWidth="1.600" />
          <circle cx="-3" cy="7" r="1.700" fill="#fff" />
          <circle cx="4.500" cy="7" r="1.700" fill="#fff" />
        </g>
      );
    case "bag":
      return (
        <g>
          <path d="M-5.500 -2H5.500L7.500 7H-7.500Z" fill="#fff" />
          <path d="M-3 -2V-4.500Q-3 -7.500 0 -7.500Q3 -7.500 3 -4.500V-2" fill="none" stroke="#fff" strokeWidth="1.700" />
          <path d="M-2.800 1.500Q0 5 2.800 1.500" fill="none" stroke="#0a96fb" strokeWidth="1.500" />
        </g>
      );
    case "camera":
      return (
        <g>
          <path d="M-2 -6H3L4.500 -4H8.500V6.500H-8.500V-1H-4V-4Z" fill="#fff" />
          <circle cx="1" cy="1" r="3.200" fill="#b265fb" />
          <path d="M-6.500 -7V-2M-9 -4.500H-4" stroke="#fff" strokeWidth="1.400" />
        </g>
      );
    case "school":
      return (
        <g fill="#fff">
          <path d="M0 -8L10 -2.500L0 3L-10 -2.500Z" />
          <path d="M-6 1.800L0 5L6 1.800V5L0 8.500L-6 5Z" />
          <path d="M8.500 -2.500H10V5H8.500Z" />
        </g>
      );
    case "tree":
      return <path d="M0 -9L4.500 -3H3L7.500 3.500H1.300V7H-1.300V3.500H-7.500L-3 -3H-4.500Z" fill="#fff" />;
  }
}

const halo = { paintOrder: "stroke" as const };

function CityMap() {
  return (
    <svg width="2525" height="557" viewBox="0 0 2525 557" className="block bg-[#f5f5f5]" fontFamily="Roboto, sans-serif">
      {zones.map(([t, fill, p], i) => (
        <path key={i} d={line(t, p) + "Z"} fill={fill} />
      ))}
      <g fill="none" strokeLinejoin="round">
        {minorRoads.map(([t, w, p], i) => (
          <path key={i} d={line(t, p)} stroke={w < 5 ? "#d0dae4" : "#cbd6df"} strokeWidth={w} strokeLinecap="round" />
        ))}
        {majorRoads.map(([t, w, p], i) => (
          <path key={i} d={line(t, p)} stroke="#bccad4" strokeWidth={w + 1.6} />
        ))}
        {majorRoads.map(([t, w, p], i) => (
          <path key={i} d={line(t, p)} stroke="#d6dfe7" strokeWidth={w - 0.6} />
        ))}
        {parkPaths.map(([t, p], i) => (
          <path key={i} d={line(t, p)} stroke="#67c2a1" strokeWidth="1.3" />
        ))}
      </g>
      {arrows.map(([t, x, y, a], i) => {
        const [px, py] = project(t, x, y);
        return (
          <path
            key={i}
            transform={`translate(${px.toFixed(1)} ${py.toFixed(1)}) rotate(${a})`}
            d="M-6.500 -.9H0V-3.600L6.500 0L0 3.600V.9H-6.500Z"
            fill="#7b8894"
          />
        );
      })}
      {streets.map(({ tile, text, pts, bold }, i) => {
        const p = parse(tile, pts);
        const a = p[0];
        const b = p[p.length - 1];
        const m = p.length === 3 ? p[1] : [(a[0] + b[0]) / 2, (a[1] + b[1]) / 2];
        const c = [2 * m[0] - (a[0] + b[0]) / 2, 2 * m[1] - (a[1] + b[1]) / 2];
        const len = Math.hypot(m[0] - a[0], m[1] - a[1]) + Math.hypot(b[0] - m[0], b[1] - m[1]);
        return (
          <g key={i}>
            <path id={`street-${i}`} d={`M${a[0]} ${a[1]}Q${c[0]} ${c[1]} ${b[0]} ${b[1]}`} fill="none" />
            <text
              fontSize="19.5"
              fontWeight={bold ? 700 : 500}
              fill="#3d4b60"
              stroke="#fff"
              strokeWidth="4"
              strokeLinejoin="round"
              style={halo}
              dy="6.8"
            >
              <textPath href={`#street-${i}`} textLength={len - 0.5}>
                {text}
              </textPath>
            </text>
          </g>
        );
      })}
      {busStops.map(([t, x, y], i) => {
        const [px, py] = project(t, x, y);
        return (
          <g key={i} transform={`translate(${px.toFixed(1)} ${py.toFixed(1)})`}>
            <rect x="-11.500" y="-10.500" width="23" height="23" rx="8" fill="#8b98a3" opacity=".6" />
            <rect x="-11" y="-11" width="22" height="22" rx="7.500" fill="#fff" />
            <rect x="-9.500" y="-9.500" width="19" height="19" rx="6" fill="#465f76" />
            <path d="M-5.500 -4Q-5.500 -6 -3.500 -6H3.500Q5.500 -6 5.500 -4V4.500H4.500V6H2.500V4.500H-2.500V6H-4.500V4.500H-5.500Z" fill="#fff" />
            <rect x="-3.800" y="-3.500" width="7.600" height="3.500" fill="#465f76" />
            <circle cx="-2.800" cy="2.300" r="1" fill="#465f76" />
            <circle cx="2.800" cy="2.300" r="1" fill="#465f76" />
          </g>
        );
      })}
      {places.map(([t, l, r, y, color, text], i) => {
        const [x1, py] = project(t, l, y);
        const [x2] = project(t, r, y);
        return (
          <text
            key={i}
            x={x1}
            y={py + 7}
            textLength={x2 - x1}
            fontSize="20"
            fill={color}
            stroke="#fff"
            strokeWidth="4"
            strokeLinejoin="round"
            style={halo}
          >
            {text}
          </text>
        );
      })}
      {pins.map(([t, x, y, kind], i) => {
        const [px, py] = project(t, x, y);
        return (
          <g key={i} transform={`translate(${px.toFixed(1)} ${py.toFixed(1)})`}>
            <path d="M0 24C-3 24 -4 18 -11 14A18 18 0 1 1 11 14C4 18 3 24 0 24Z" fill="#9aa3ab" opacity=".7" />
            <path d="M0 22.500C-3 22.500 -4 17.500 -11 13.500A17.500 17.500 0 1 1 11 13.500C4 17.500 3 22.500 0 22.500Z" fill="#fff" />
            <circle r="15.500" fill={pinFill[kind]} />
            <PinGlyph kind={kind} />
          </g>
        );
      })}
      {/* Selected place marker */}
      <g transform="translate(1267.500 342)">
        <path d="M0 35.500C-2 25 -6 20 -11 13.500C-16 7.500 -19 4 -19 -2A19 18.500 0 0 1 19 -2C19 4 16 7.500 11 13.500C6 20 2 25 0 35.500Z" fill="#ea4335" stroke="#c5221f" strokeWidth="1" />
        <circle cy="0" r="7.300" fill="#b31412" />
      </g>
    </svg>
  );
}

/* ------------------------------------------------------------------ */
/* Icons                                                               */
/* ------------------------------------------------------------------ */

function PhoneIcon() {
  return (
    <svg width="30" height="30" viewBox="0 0 30 30" fill="none" stroke="#fff" strokeWidth="2.2" strokeLinecap="round">
      <rect x="7" y="2" width="16" height="26" rx="2" />
      <path d="M13.500 24H16.500" />
    </svg>
  );
}

function LocationIcon() {
  return (
    <svg width="30" height="30" viewBox="0 0 30 30" fill="none" stroke="#fff" strokeWidth="2.2" strokeLinejoin="round">
      <path d="M15 27.500C13.500 27.500 5.700 18 5.700 11.500A9.300 9.300 0 0 1 24.300 11.500C24.300 18 16.500 27.500 15 27.500Z" />
      <circle cx="15" cy="12" r="4.300" />
    </svg>
  );
}

function ClockIcon() {
  return (
    <svg width="32" height="32" viewBox="0 0 32 32" fill="none" stroke="#fff" strokeWidth="2.2" strokeLinecap="round" strokeLinejoin="round">
      <circle cx="16" cy="16" r="13" />
      <path d="M16 8V17L20 21" />
      <path d="M2.500 6.500L6.500 2.500M29.500 6.500L25.500 2.500" />
    </svg>
  );
}

/* ------------------------------------------------------------------ */
/* Page sections                                                       */
/* ------------------------------------------------------------------ */

type InfoCardProps = { icon: React.ReactNode; title: string; lines: string[]; narrow?: boolean };

function InfoCard({ icon, title, lines, narrow }: InfoCardProps) {
  const badge = narrow ? "w-[68px]" : "w-[75px]";
  return (
    <div className="flex rounded-[15px] border border-[#dddfe0] bg-white px-[45px] pt-[30px] pb-[28.5px]">
      <div className={`${badge} flex h-[75px] shrink-0 items-center justify-center rounded-[50%] bg-[#517a9f]`}>{icon}</div>
      <div className="ml-[37.5px] flex-1">
        <h4 className="text-[30px] leading-[37px] font-semibold text-[#517a9f]">{title}</h4>
        <p className="mt-[16px] text-[24px] leading-[36px] text-[#6f6f6f]">
          {lines.map((l) => (
            <span key={l} className="block">
              {l}
            </span>
          ))}
        </p>
      </div>
    </div>
  );
}

function Field({ label }: { label: string }) {
  return (
    <input
      aria-label={label}
      placeholder={label}
      className="h-[83px] w-full rounded-full border border-[#dfdfdf] bg-white px-[37.5px] text-[24px] text-[#757575] placeholder:text-[#757575]"
    />
  );
}

function ContactForm() {
  return (
    <div className="h-[886px] w-[1284px] rounded-[15px] border border-[#dddfe0] bg-white px-[60px] pt-[76px]">
      <h6 className="text-center text-[30px] leading-[42px] font-bold text-[#517a9f]">Ponte en Contacto</h6>
      <h2 className="mt-[1px] text-center text-[54px] leading-[70px] font-semibold text-[#1d1d1d]">Preparate para Empezar</h2>
      <div className="mt-[43px] grid grid-cols-2 gap-x-[36px] gap-y-[38px]">
        <Field label="Nombre" />
        <Field label="Email" />
        <Field label="Teléfono" />
        <Field label="Asunto" />
      </div>
      <div className="relative mt-[37px]">
        <textarea
          aria-label="Mensaje"
          placeholder="Escriba un mensaje"
          className="block h-[227px] w-full resize-none rounded-[37px] border border-[#dfdfdf] bg-white px-[37.5px] pt-[23px] text-[24px] leading-[36px] placeholder:text-[#757575]"
        />
        <svg className="absolute right-[1px] bottom-[2px]" width="23" height="23" viewBox="0 0 23 23" stroke="#555" strokeWidth="1.6">
          <path d="M1 22L21.500 1.500M7 22L21.500 7.500M13 22L21.500 13.500M19 22L21.500 19.500" />
        </svg>
      </div>
      <div className="mt-[41px] flex justify-center">
        <button className="h-[68px] w-[314px] rounded-full bg-[#517a9f] pt-[1px] pl-[1px] text-[24px] font-bold tracking-[1.9px] whitespace-nowrap text-white shadow-[0_3px_5px_rgba(0,0,0,0.15)]">
          ENVIAR MENSAJE
        </button>
      </div>
    </div>
  );
}

const STAR = "M8 0L10 5.700H16L11.200 9.300L13 15L8 11.500L3 15L4.800 9.300L0 5.700H6Z";

function PlaceCard() {
  return (
    <div className="flex h-[178px] w-[468px] rounded-[2px] bg-white pl-[18px] font-[Roboto,sans-serif] shadow-[0_1px_5px_rgba(0,0,0,0.3)]">
      <div className="w-[300px] pt-[15px]">
        <div className="text-[21px] leading-[26px] font-medium whitespace-nowrap text-black">Universidad Peruana de Cienc…</div>
        <div className="mt-[8px] text-[18px] leading-[22px] text-[#5b5b5b]">
          Av. Gral. Salaverry 2255, San Isidro
          <br />
          15076
        </div>
        <div className="mt-[8px] flex items-center">
          <span className="text-[21px] leading-[25px] font-medium text-[#5b5b5b]">4,4</span>
          <svg className="ml-[4px]" width="84" height="16" viewBox="0 0 84 16">
            {[0, 1, 2, 3].map((i) => (
              <path key={i} d={STAR} transform={`translate(${i * 16.7} 0)`} fill="#e7710b" />
            ))}
            <path d={STAR} transform="translate(66.800 0)" fill="#cfd3d6" />
            <path d="M8 0V11.500L3 15L4.800 9.300L0 5.700H6Z" transform="translate(66.800 0)" fill="#e7710b" />
          </svg>
          <span className="ml-[15px] pt-px text-[18px] leading-[25px] text-[#1a73e8]">428 reseñas</span>
        </div>
        <div className="mt-[14px] text-[18px] leading-[22px] text-[#1a73e8]">Ampliar el mapa</div>
      </div>
      <div className="flex flex-1 flex-col items-center pt-[20px] pr-[3px]">
        <svg width="28" height="28" viewBox="0 0 28 28">
          <path d="M1 4L4 1L15 11L12 15Z" fill="#b7cdfb" />
          <path d="M10.500 28V17Q10.500 14 13 11.500L19 6L15 1H28V13L23.500 9.500L18 15Q17 16 17 18V28Z" fill="#5b93f9" />
        </svg>
        <span className="mt-[8px] text-[18px] leading-[22px] text-[#1a73e8]">Cómo llegar</span>
      </div>
    </div>
  );
}

export default function App() {
  return (
    <div className="relative h-[1266px] w-[2525px] overflow-hidden bg-white font-[Inter,sans-serif]">
      <section className="relative z-10 flex h-[709px] items-start pt-[18px] pl-[295px]">
        <div className="mr-[36px] flex w-[624px] flex-col gap-[46px]">
          <InfoCard icon={<PhoneIcon />} title="Contacto" lines={["95323739512", "gasguard@gmail.com"]} />
          <InfoCard icon={<LocationIcon />} title="Dirección" lines={["Av. Gral. Salaverry 2255, San Isidro", "15076", "Perú"]} narrow />
          <InfoCard icon={<ClockIcon />} title="Horario" lines={["24 Horas / 7 Días Abierto", "Hora de oficina: 8 AM - 5:30 PM"]} />
        </div>
        <ContactForm />
      </section>
      <section className="relative">
        <CityMap />
        <div className="absolute top-[15px] left-[15px]">
          <PlaceCard />
        </div>
      </section>
      <button
        aria-label="Subir"
        className="absolute right-[36px] bottom-[41px] z-20 flex h-[67px] w-[67px] items-center justify-center rounded-[6px] bg-[#517a9f]"
      >
        <svg width="14" height="9" viewBox="0 0 14 9" fill="none" stroke="#fff" strokeWidth="1.6">
          <path d="M1 8L7 1.500L13 8" />
        </svg>
      </button>
    </div>
  );
}
